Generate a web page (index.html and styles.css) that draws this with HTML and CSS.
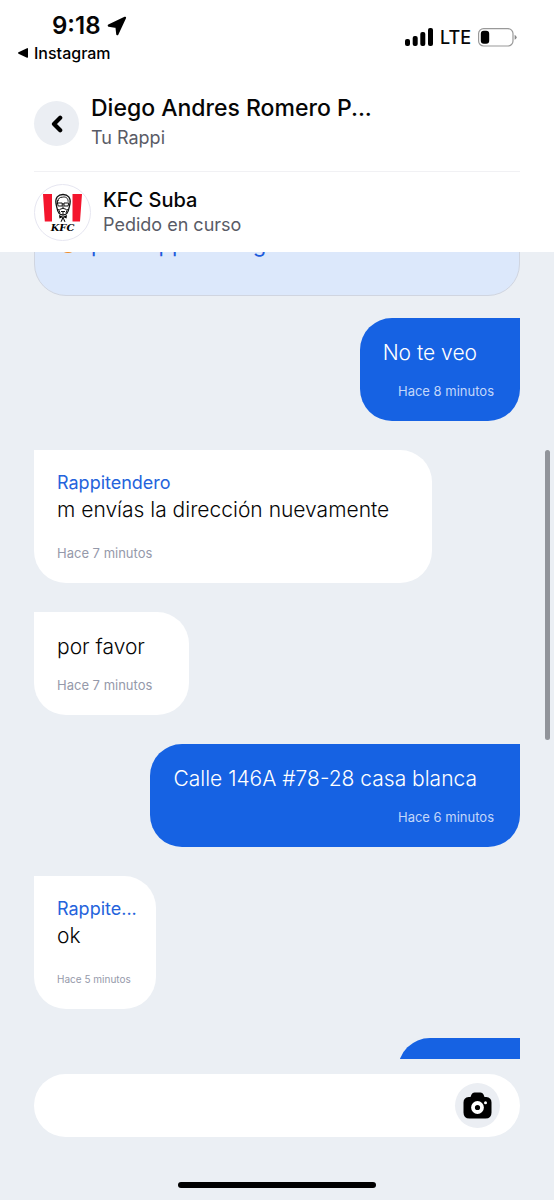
FILE: index.html
```html
<!DOCTYPE html>
<html lang="es">
<head>
  <meta charset="UTF-8" />
  <meta name="viewport" content="width=device-width, initial-scale=1.0"/>
  <title>Chat - Tu Rappi</title>
  <link rel="stylesheet" href="styles.css">
</head>

<body>
  <header class="top">
    <div class="status-bar">
      <div class="status-left">
        <div class="clock">
          <span>9:18</span>
          <svg width="20" height="20" viewBox="0 0 20 20" aria-hidden="true"><path d="M18 1.800 1.800 9.600l7.700 1.400.8 7.200z" stroke="#000" stroke-width="2.200" stroke-linejoin="round"/></svg>
        </div>
        <a class="back-app" href="#">
          <svg width="10" height="10" viewBox="0 0 10 10" aria-hidden="true"><path d="M.5 4.300 9 .2q1-.4 1 .7v8.200q0 1-1 .6L.5 5.700q-.9-.7 0-1.400z"/></svg>
          <span>Instagram</span>
        </a>
      </div>
      <div class="status-right">
        <svg width="28" height="18" viewBox="0 0 28 18" aria-hidden="true">
          <rect x="0" y="11" width="5" height="7" rx="2"/>
          <rect x="7.7" y="8" width="5" height="10" rx="2"/>
          <rect x="15.3" y="4" width="5" height="14" rx="2"/>
          <rect x="23" y="0" width="5" height="18" rx="2"/>
        </svg>
        <span>LTE</span>
        <svg width="39" height="19" viewBox="0 0 39 19" aria-hidden="true">
          <rect x=".6" y=".6" width="34.4" height="17.4" rx="5" fill="none" stroke="#999" stroke-width="1.2"/>
          <rect x="2.8" y="2.8" width="8.4" height="13" rx="3"/>
          <path d="M36.6 6.8q2 1 2 2.500t-2 2.500z" fill="#888"/>
        </svg>
      </div>
    </div>

    <div class="contact">
      <button class="round-btn" type="button" aria-label="Volver">
        <svg width="12" height="18" viewBox="0 0 12 18" aria-hidden="true"><path d="M9.2 2.700 3 9l6.200 6.300" fill="none" stroke="#000" stroke-width="4.200" stroke-linecap="round" stroke-linejoin="round"/></svg>
      </button>
      <div>
        <h1>Diego Andres Romero P...</h1>
        <p class="sub">Tu Rappi</p>
      </div>
    </div>

    <div class="store">
      <svg class="store-logo" viewBox="0 0 57 57" role="img" aria-label="KFC">
        <circle cx="28.5" cy="28.5" r="28" fill="#fff" stroke="#e6e6f1"/>
        <path d="M9 10h9v27.500h-7.200z M38.500 10h9.500l-2 27.500h-7.500z" fill="#f4152d"/>
        <path d="M22 19.500c-1-5.500 2-9 7-9s8 3.500 7 9l-1 4.500c-.6 4-3 7-6 7s-5.400-3-6-7z" fill="#fff" stroke="#111" stroke-width="1.300"/>
        <path d="M24 17c0-2.500 2-4 4.500-3.800 3-.8 5.800.8 5.600 4.500M23.800 16l-.6 4" fill="none" stroke="#111" stroke-width="1"/>
        <path d="M23.400 19h4.800v3h-4zM30 19h4.800l-.8 3h-4zM28.200 20H30" fill="none" stroke="#111" stroke-width="1"/>
        <path d="M29 21.500v2.500M25.500 25.500q3.500-2.500 7 0M27 27.500h4M29 27.500v3M24.500 25l1.500 4M33.500 25 32 29" fill="none" stroke="#111" stroke-width="1"/>
        <path d="m25 31 3.500 1.500h1L33 31l-.5 3.500-3-1.300 2 4.800-1.400-.4-1-3.200-1.300 3.200-1.300.4 2-4.800-3 1.300z"/>
        <text class="logo-text" x="28.500" y="46.500" text-anchor="middle">KFC</text>
      </svg>
      <div>
        <h2>KFC Suba</h2>
        <p class="sub">Pedido en curso</p>
      </div>
    </div>
  </header>

  <main class="chat">
    <div class="messages">
      <div class="notice"><span class="dot"></span>por Rappi consigo</div>

      <div class="bubble sent">
        <p class="text">No te veo</p>
        <p class="time">Hace 8 minutos</p>
      </div>

      <div class="bubble received">
        <p class="author">Rappitendero</p>
        <p class="text">m envías la dirección nuevamente</p>
        <p class="time">Hace 7 minutos</p>
      </div>

      <div class="bubble received">
        <p class="text">por favor</p>
        <p class="time">Hace 7 minutos</p>
      </div>

      <div class="bubble sent">
        <p class="text">Calle 146A #78-28 casa blanca</p>
        <p class="time">Hace 6 minutos</p>
      </div>

      <div class="bubble received compact">
        <p class="author">Rappite...</p>
        <p class="text">ok</p>
        <p class="time">Hace 5 minutos</p>
      </div>

      <div class="bubble sent next"></div>
    </div>
    <div class="scrollbar"></div>
  </main>

  <footer class="bottom">
    <form class="composer">
      <input type="text" aria-label="Mensaje" />
      <button class="round-btn" type="button" aria-label="Enviar foto">
        <svg width="29" height="27" viewBox="0 0 29 27" aria-hidden="true">
          <path d="M8.500 2.500Q9.500.5 11.500.5h6q2 0 3 2l1 2.500h1.800q5.200.5 5.200 5.500v10q0 6-6 6h-16q-6 0-6-6v-10q0-5 5.200-5.500h1.800z"/>
          <circle cx="14.500" cy="15.500" r="4.500" fill="#000" stroke="#fff" stroke-width="3.800"/>
          <circle cx="22.500" cy="10.800" r="1.500" fill="#fff"/>
        </svg>
      </button>
    </form>
    <div class="home-bar"></div>
  </footer>
</body>
</html>
```

FILE: styles.css
```css
* {
  box-sizing: border-box;
}

body {
  margin: 0;
  height: 100vh;
  display: flex;
  flex-direction: column;
  overflow: hidden;
  font-family: 'Inter', sans-serif;
  background: #ebeff4;
  color: #060606;
}

h1, h2, p {
  margin: 0;
  font-weight: normal;
}

.top {
  position: relative;
  z-index: 1;
  flex: none;
  padding: 0 34px;
  background: #fff;
}

.status-bar {
  display: flex;
  justify-content: space-between;
  height: 91px;
  margin: 0 -16px;
  padding-top: 12px;
}

.clock {
  display: flex;
  align-items: center;
  gap: 6px;
  padding-left: 34px;
  font-size: 24px;
  line-height: 28px;
  font-weight: 600;
}

.back-app {
  display: flex;
  align-items: center;
  gap: 6px;
  color: #000;
  font-size: 16px;
  line-height: 26px;
  font-weight: 500;
  text-decoration: none;
}

.status-right {
  display: flex;
  align-items: center;
  gap: 7px;
  height: 50px;
  padding-right: 19px;
  font-size: 18px;
  font-weight: 500;
}

.contact {
  display: flex;
  align-items: flex-start;
  gap: 12px;
  height: 81px;
  border-bottom: 1px solid #f1f1f4;
}

.contact .round-btn {
  margin-top: 10px;
}

.round-btn {
  display: flex;
  flex: none;
  align-items: center;
  justify-content: center;
  width: 45px;
  height: 45px;
  padding: 0;
  border: none;
  border-radius: 50%;
  background: #ebeef3;
  cursor: pointer;
}

h1 {
  font-size: 23px;
  line-height: 34px;
  font-weight: 500;
}

h2 {
  font-size: 20px;
  line-height: 26px;
  font-weight: 500;
}

.sub {
  color: #595b66;
  font-size: 18px;
  line-height: 24px;
}

.contact .sub {
  line-height: 26px;
}

.store {
  display: flex;
  align-items: center;
  gap: 12px;
  height: 80px;
}

.store-logo {
  width: 57px;
  height: 57px;
}

.logo-text {
  font-family: 'DejaVu Serif', serif;
  font-size: 10px;
  font-weight: bold;
  font-style: italic;
}

.chat {
  position: relative;
  flex: 1;
  min-height: 0;
  overflow: hidden;
}

.messages {
  display: flex;
  flex-direction: column;
  align-items: flex-start;
  gap: 29px;
  margin-top: -40px;
  padding: 0 34px;
}

.notice {
  display: flex;
  align-items: center;
  gap: 14px;
  width: 100%;
  height: 84px;
  margin-bottom: -7px;
  padding: 0 24px 21px;
  border: 1px solid #d0d5e0;
  border-radius: 32px;
  background: #dce8fb;
  color: #1e5bdc;
  font-size: 22px;
}

.dot {
  width: 18px;
  height: 18px;
  border-radius: 50%;
  background: #f08a24;
}

.bubble {
  max-width: 90%;
  padding: 21px 23px 20px;
  border-radius: 32px;
}

.sent {
  align-self: flex-end;
  border-top-right-radius: 0;
  background: #1662e3;
  color: #fff;
}

.received {
  border-top-left-radius: 0;
  background: #fff;
}

.author {
  margin-bottom: 1px;
  color: #2463dc;
  font-size: 18px;
  line-height: 24px;
}

.text {
  padding-right: 20px;
  font-size: 21px;
  line-height: 28px;
  font-weight: 300;
}

.time {
  margin-top: 14px;
  padding-right: 14px;
  color: #9599aa;
  font-size: 13px;
  line-height: 20px;
}

.author ~ .time {
  margin-top: 19px;
}

.sent .time {
  padding: 0 3px 0 15px;
  color: #c3d7fa;
  text-align: right;
}

.compact {
  width: 122px;
}

.compact p {
  white-space: nowrap;
}

.compact .time {
  padding-right: 0;
  font-size: 10px;
}

.next {
  width: 122px;
  height: 103px;
}

.scrollbar {
  position: absolute;
  top: 198px;
  right: 4px;
  width: 5px;
  height: 290px;
  border-radius: 3px;
  background: #91949a;
}

.bottom {
  flex: none;
  padding: 15px 34px 12px;
}

.composer {
  display: flex;
  align-items: center;
  height: 63px;
  padding: 0 20px 0 23px;
  border-radius: 32px;
  background: #fff;
}

.composer input {
  flex: 1;
  min-width: 0;
  border: none;
  outline: none;
  background: none;
  font-family: inherit;
  font-size: 20px;
}

.home-bar {
  width: 198px;
  height: 6px;
  margin: 45px auto 0;
  border-radius: 3px;
  background: #000;
}
```
